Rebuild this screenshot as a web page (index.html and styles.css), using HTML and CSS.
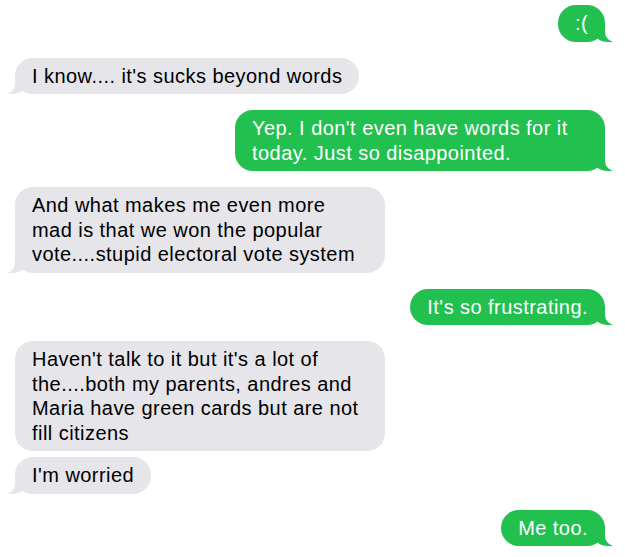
FILE: index.html
```html
<!DOCTYPE html>
<html lang="en">
<head>
    <meta charset="UTF-8">
    <meta name="viewport" content="width=device-width, initial-scale=1.0">
    <title>Messages</title>
    <link rel="stylesheet" href="styles.css">
</head>
<body>

    <div class="chat">
        <!-- sent -->
        <div class="msg sent tail">:(</div>

        <div class="msg received tail">I know.... it's sucks beyond words</div>

        <div class="msg sent tail">Yep. I don't even have words for it today. Just so disappointed.</div>

        <div class="msg received tail">And what makes me even more mad is that we won the popular vote....stupid electoral vote system</div>

        <div class="msg sent tail">It's so frustrating.</div>

        <!-- grouped: first one has no tail -->
        <div class="msg received grouped">Haven't talk to it but it's a lot of the....both my parents, andres and Maria have green cards but are not fill citizens</div>
        <div class="msg received tail">I'm worried</div>

        <div class="msg sent tail">Me too.</div>
    </div>

</body>
</html>
```

FILE: styles.css
```css
body {
    font-family: "Liberation Sans", Arial, sans-serif;
    background-color: #ffffff;
    margin: 0;
    padding: 0;
}

.chat {
    display: flex;
    flex-direction: column;
    padding: 5px 20px 12px 15px;
    gap: 16px;
}

.msg {
    position: relative;
    max-width: 336px;
    padding: 6px 17px 6px 17px;
    border-radius: 18px;
    font-size: 20px;
    line-height: 24.5px;
    letter-spacing: 0.45px;
}

.sent {
    align-self: flex-end;
    background-color: #22c04f;
    color: white;
}

.received {
    align-self: flex-start;
    background-color: #e5e5ea;
    color: #000;
}

.grouped {
    margin-bottom: -10px;
}

/* bubble tails */
.tail::before,
.tail::after {
    content: "";
    position: absolute;
    bottom: 0;
    height: 20px;
}

.sent.tail::before {
    right: -7px;
    border-right: 20px solid #22c04f;
    border-bottom-left-radius: 16px 14px;
}

.sent.tail::after {
    right: -26px;
    width: 26px;
    background-color: white;
    border-bottom-left-radius: 10px;
}

.received.tail::before {
    left: -7px;
    border-left: 20px solid #e5e5ea;
    border-bottom-right-radius: 16px 14px;
}

.received.tail::after {
    left: -26px;
    width: 26px;
    background-color: white;
    border-bottom-right-radius: 10px;
}
```
